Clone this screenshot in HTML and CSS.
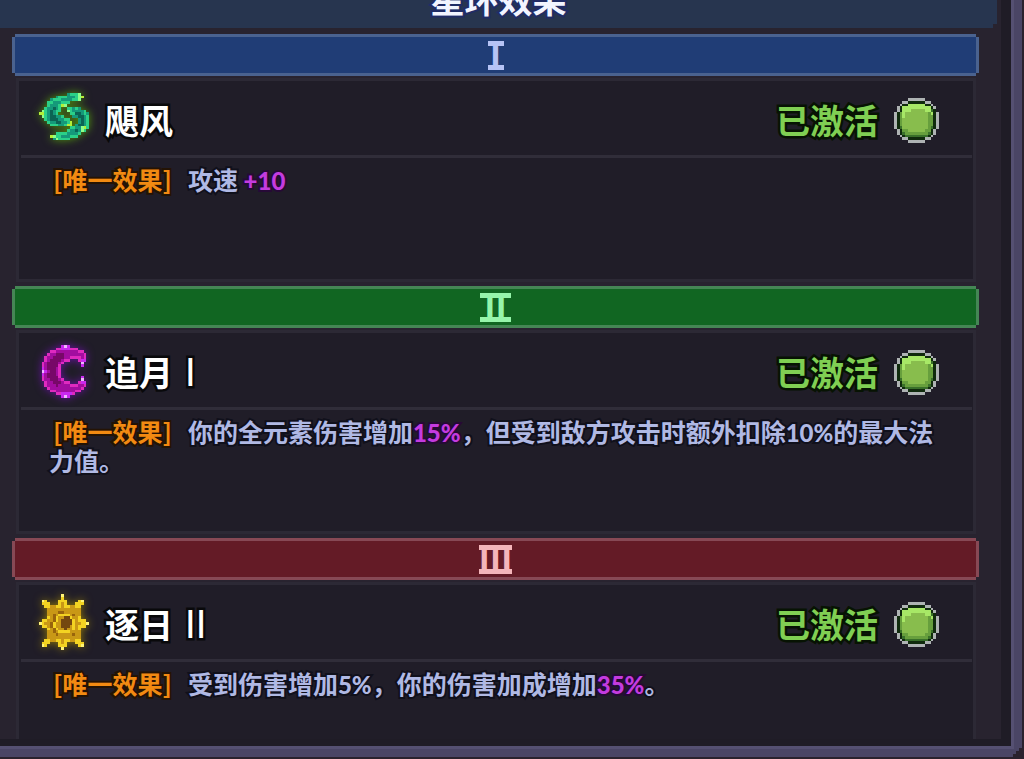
FILE: index.html
```
<!DOCTYPE html>
<html lang="zh-CN">
<head>
<meta charset="utf-8">
<title>星环效果</title>
<link rel="stylesheet" href="styles.css">
</head>
<body>
<div class="frame">
  <main class="viewport">
    <header class="header"><h1>星环效果</h1></header>

    <section class="ring ring-blue">
      <h2 class="band"><span class="numeral one">Ⅰ</span></h2>
      <article class="card">
        <div class="card-head">
          <svg class="icon glow-green" data-sprite="wind" aria-hidden="true"></svg>
          <h3>飓风</h3>
          <span class="status">已激活</span>
          <svg class="orb" data-sprite="orb" aria-hidden="true"></svg>
        </div>
        <p class="desc"><span class="tag">[唯一效果]</span>攻速 <b class="plus">+10</b></p>
      </article>
    </section>

    <section class="ring ring-green">
      <h2 class="band"><span class="numeral two">Ⅱ</span></h2>
      <article class="card">
        <div class="card-head">
          <svg class="icon glow-purple" data-sprite="moon" aria-hidden="true"></svg>
          <h3>追月<span class="rank">I</span></h3>
          <span class="status">已激活</span>
          <svg class="orb" data-sprite="orb" aria-hidden="true"></svg>
        </div>
        <p class="desc"><span class="tag">[唯一效果]</span>你的全元素伤害增加<b class="plus">15%</b>，但受到敌方攻击时额外扣除<b>10%</b>的最大法力值。</p>
      </article>
    </section>

    <section class="ring ring-red">
      <h2 class="band"><span class="numeral three">Ⅲ</span></h2>
      <article class="card">
        <div class="card-head">
          <svg class="icon glow-gold" data-sprite="sun" aria-hidden="true"></svg>
          <h3>逐日<span class="rank">II</span></h3>
          <span class="status">已激活</span>
          <svg class="orb" data-sprite="orb" aria-hidden="true"></svg>
        </div>
        <p class="desc"><span class="tag">[唯一效果]</span>受到伤害增加<b>5%</b>，你的伤害加成增加<b class="plus">35%</b>。</p>
      </article>
    </section>
  </main>
</div>
<script src="sprites.js"></script>
</body>
</html>
```
FILE: styles.css
```
* { box-sizing: border-box; }
body {
  margin: 0;
  padding: 0 2px 2px 0;
  background: #2a222e;
  font-family: "Noto Sans CJK SC", sans-serif;
}
h1, h2, h3, p { margin: 0; }
.frame {
  height: calc(100vh - 2px);
  padding: 0 13px 10px 0;
  display: flex;
  background: #1f1c26;
  border-right: 8px solid #4a4565;
  border-bottom: 8px solid #4a4565;
  box-shadow: inset -3px -3px 0 #555072;
  clip-path: polygon(0 0, 100% 0, 100% calc(100% - 9px), calc(100% - 3px) calc(100% - 9px), calc(100% - 3px) calc(100% - 6px), calc(100% - 6px) calc(100% - 6px), calc(100% - 6px) calc(100% - 3px), calc(100% - 9px) calc(100% - 3px), calc(100% - 9px) 100%, 0 100%);
  overflow: hidden;
}
.viewport {
  flex: 1;
  min-width: 0;
  overflow: hidden;
  background: #28232f;
}
.header {
  height: 28px;
  margin-right: 4px;
  padding-bottom: 8px;
  display: flex;
  justify-content: center;
  align-items: flex-end;
  background: #27354f;
  clip-path: polygon(0 0, 100% 0, 100% calc(100% - 4px), calc(100% - 4px) calc(100% - 4px), calc(100% - 4px) 100%, 0 100%);
}
.header h1 {
  font-size: 34px;
  line-height: 42px;
  color: #f2f4ff;
  -webkit-text-stroke: 4px #202c66;
  paint-order: stroke fill;
}
.ring { margin: 6px 22px 4px 12px; }
.ring + .ring { margin-top: 0; }
.band {
  height: 42px;
  display: flex;
  justify-content: center;
  align-items: center;
  border: 3px solid;
  font-size: 34px;
  line-height: 36px;
  clip-path: polygon(3px 0, calc(100% - 3px) 0, calc(100% - 3px) 3px, 100% 3px, 100% calc(100% - 3px), calc(100% - 3px) calc(100% - 3px), calc(100% - 3px) 100%, 3px 100%, 3px calc(100% - 3px), 0 calc(100% - 3px), 0 3px, 3px 3px);
}
.numeral {
  height: 29px;
  display: flex;
  justify-content: center;
  align-items: center;
  border-top: 5px solid;
  border-bottom: 5px solid;
}
.one { width: 16px; }
.two { width: 31px; }
.three { width: 33px; }
.ring-blue .band { background: #203d76; border-color: #4a628f; color: #b6c3f5; }
.ring-green .band { background: #116622; border-color: #458655; color: #96f5ab; }
.ring-red .band { background: #641b26; border-color: #874955; color: #f5b5ba; }
.card {
  min-height: 204px;
  margin: 2px 3px 0 4px;
  background: #201d28;
  border: 3px solid #2c2935;
}
.card-head {
  height: 77px;
  margin: 0 1px 0 2px;
  padding: 0 33px 0 15px;
  display: flex;
  align-items: center;
  border-bottom: 3px solid #302d39;
}
.icon { width: 56px; height: 56px; flex: none; }
.orb { width: 45px; height: 45px; flex: none; margin-left: 16px; margin-top: 4px; }
.card-head h3 {
  flex: 1;
  margin-left: 13px;
  padding-top: 4px;
  font-size: 34px;
  line-height: 50px;
  color: #fff;
  -webkit-text-stroke: 5px #09090b;
  paint-order: stroke fill;
}
.rank { margin-left: 12px; font-family: Lato, sans-serif; font-size: 38px; line-height: 40px; font-weight: 400; }
.status {
  padding-top: 4px;
  font-size: 34px;
  line-height: 50px;
  font-weight: 700;
  color: #80cf53;
  -webkit-text-stroke: 5px #071303;
  paint-order: stroke fill;
}
.desc {
  padding: 7px 26px 8px 30px;
  font-size: 25px;
  line-height: 29px;
  font-weight: 700;
  color: #b0b9e4;
  -webkit-text-stroke: 4px #10101b;
  paint-order: stroke fill;
}
.desc b { font-family: Lato, sans-serif; font-size: 24px; line-height: 20px; }
.desc .plus { color: #c43be0; -webkit-text-stroke-color: #260a36; }
.tag { margin: 0 16px 0 4px; color: #f28a12; -webkit-text-stroke-color: #241304; }
.glow-green { filter: drop-shadow(0 0 4px #52960b); }
.glow-purple { filter: drop-shadow(0 0 4px #6612a0); }
.glow-gold { filter: drop-shadow(0 0 4px #8c7608); }
```
FILE: sprites.js
```
const sprites = {
  wind: {
    colors: { a: '#2bd088', b: '#15997a', c: '#0b6454', d: '#8dff8a', y: '#b4ee38' },
    rows: [
      '....................',
      '...........baaad....',
      '.......baaabbbady...',
      '.....baaabbbbaad....',
      '....aabbbaaa........',
      '....abbbayd.........',
      '...abbcba..aabab....',
      '..dabcbaa..dabbbba..',
      '.yyabcba....aaccbab.',
      '..dabccbba...bbccba.',
      '...abcccbbaa...bcba.',
      '....abbccbbay..bcba.',
      '.....aaabbayy.bccba.',
      '............aabbdya.',
      '...........abbcbda..',
      '.......aaaabbbba....',
      '.....ydaabbbaaa.....',
      '......bdaaaa........',
      '....................',
      '....................'
    ]
  },
  moon: {
    colors: { p: '#df2abf', m: '#a30da0', d: '#780868', w: '#f0b5ff', v: '#c928ef' },
    rows: [
      '....................',
      '.........vwv........',
      '.......ppvvvppp.....',
      '.....ppmmmmmmmmpp...',
      '....pmmdddmmmmmmmp..',
      '...pmmddddmmppppmp..',
      '...pmddddmpp...pvv..',
      '..pmddddmp......w...',
      '..pmddddp.......v...',
      '..vmdddmp...........',
      '..wvmddmp...........',
      '..vmdddmp...........',
      '..pmddddp.......v...',
      '..pmmdddmp......w...',
      '...pmmdddmpp...pvv..',
      '...pmmmdmmmmpppmmp..',
      '....pmmmmmmmmmmmp...',
      '.....ppmmmmmmmpp....',
      '.......ppvvvvp......',
      '.........vwv........'
    ]
  },
  sun: {
    colors: { y: '#f3d322', o: '#c99816', d: '#98640c', k: '#744710', w: '#fff579' },
    rows: [
      '.........w..........',
      '.........y..........',
      '..wy....yyy....yw...',
      '..yyy...yoy...yyy...',
      '...yyooyyoyyooyy....',
      '....oooooooooooo....',
      '....ooooddoooooo....',
      '....oodoyyyyodoo....',
      '....yodyookkyooy....',
      '..yyoodyokkkkyoyyy..',
      '.wyoodyookkkkyooyyw.',
      '..yyodyookkkoyoyyy..',
      '....yodyookooyoy....',
      '....oodoyyyyoooo....',
      '....ooodooooodoo....',
      '....oooooooooooo....',
      '...yyooyyoyyooyy....',
      '..yyy...yoy...yyy...',
      '..wy....yyy....yw...',
      '.........w..........'
    ]
  },
  orb: {
    colors: { e: '#aeb3b3', k: '#102b0d', l: '#a7e866', g: '#88bd4d', m: '#679f3d', d: '#39702a' },
    rows: [
      '.....eeeeee.....',
      '...eekkkkkkee...',
      '..ekkllllllkke..',
      '.ekllllllllllke.',
      '.eklllggggglldk.',
      'ekmlggggggggmlke',
      'ekmlggggggggmmke',
      'ekmgggggggggmmke',
      'ekmgggggggggmmke',
      'ekmgggggggggmmke',
      'ekdgggggggggmdke',
      '.ekmmggggggmmke.',
      '.ekdmmmmmmmmdke.',
      '..ekddddddddke..',
      '...eekkkkkkee...',
      '.....eeeeee.....'
    ]
  }
};

document.querySelectorAll('[data-sprite]').forEach((svg) => {
  const { colors, rows } = sprites[svg.dataset.sprite];
  svg.setAttribute('viewBox', `0 0 ${rows[0].length} ${rows.length}`);
  svg.setAttribute('shape-rendering', 'crispEdges');
  rows.forEach((row, y) => [...row].forEach((key, x) => {
    if (!colors[key]) return;
    const rect = document.createElementNS('http://www.w3.org/2000/svg', 'rect');
    rect.setAttribute('x', x);
    rect.setAttribute('y', y);
    rect.setAttribute('width', 1);
    rect.setAttribute('height', 1);
    rect.setAttribute('fill', colors[key]);
    svg.appendChild(rect);
  }));
});
```
